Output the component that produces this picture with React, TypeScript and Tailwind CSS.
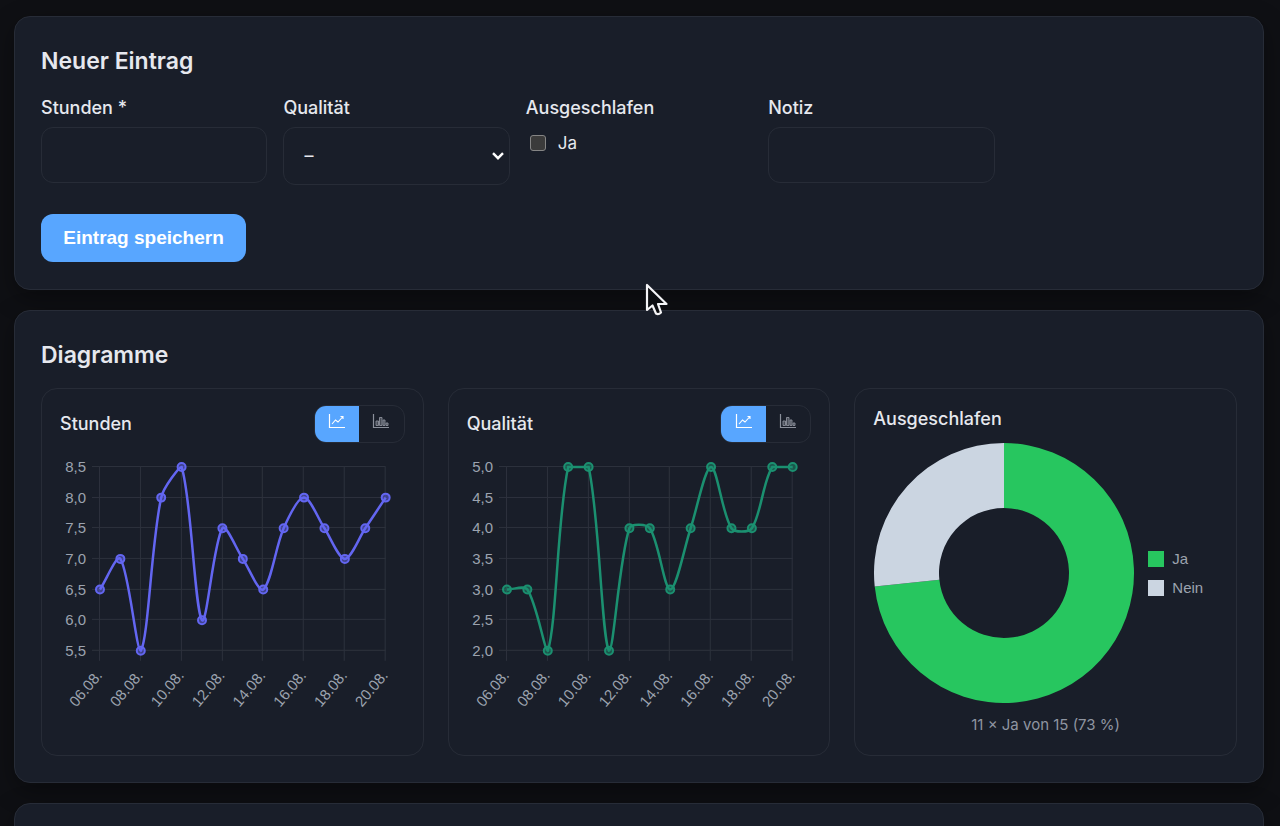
import React from "react";

const DATES = ["06.08.", "08.08.", "10.08.", "12.08.", "14.08.", "16.08.", "18.08.", "20.08."];
const AREA = { left: 40, right: 326, top: 12, bottom: 196 };
const TENSION = 0.3;

type Point = { x: number; y: number };

function clampY(y: number) {
  return Math.max(AREA.top, Math.min(AREA.bottom, y));
}

function smoothPath(points: Point[]) {
  const controls = points.map((cur, i) => {
    const prev = points[Math.max(0, i - 1)];
    const next = points[Math.min(points.length - 1, i + 1)];
    const d01 = Math.hypot(cur.x - prev.x, cur.y - prev.y);
    const d12 = Math.hypot(next.x - cur.x, next.y - cur.y);
    const fa = (TENSION * d01) / (d01 + d12);
    const fb = (TENSION * d12) / (d01 + d12);
    return {
      before: { x: cur.x - fa * (next.x - prev.x), y: clampY(cur.y - fa * (next.y - prev.y)) },
      after: { x: cur.x + fb * (next.x - prev.x), y: clampY(cur.y + fb * (next.y - prev.y)) },
    };
  });
  return points
    .map((p, i) => {
      if (i === 0) return `M${p.x} ${p.y}`;
      const a = controls[i - 1].after;
      const b = controls[i].before;
      return `C${a.x} ${a.y} ${b.x} ${b.y} ${p.x} ${p.y}`;
    })
    .join(" ");
}

function LineChart({ label, values, min, max, color }: { label: string; values: number[]; min: number; max: number; color: string }) {
  const stepX = (AREA.right - AREA.left) / (values.length - 1);
  const toY = (v: number) => AREA.bottom - ((v - min) / (max - min)) * (AREA.bottom - AREA.top);
  const points = values.map((v, i) => ({ x: AREA.left + i * stepX, y: toY(v) }));
  const ticks: number[] = [];
  for (let v = max; v >= min; v -= 0.5) ticks.push(v);

  return (
    <svg viewBox="0 0 345 256" className="block w-full font-['Liberation_Sans',Arial,sans-serif] text-[15px]" role="img" aria-label={label}>
      {ticks.map((v) => (
        <g key={v}>
          <line x1={AREA.left - 8} x2={AREA.right} y1={Math.round(toY(v)) - 0.5} y2={Math.round(toY(v)) - 0.5} stroke="#2d323d" />
          <text x={26} y={toY(v) + 5} textAnchor="end" fill="#9ca3af">
            {v.toFixed(1).replace(".", ",")}
          </text>
        </g>
      ))}
      {DATES.map((d, i) => {
        const x = AREA.left + i * 2 * stepX;
        return (
          <g key={d}>
            <line x1={Math.round(x) - 0.5} x2={Math.round(x) - 0.5} y1={AREA.top} y2={AREA.bottom + 10} stroke="#2d323d" />
            <text transform={`translate(${x + 3} 221) rotate(-50)`} textAnchor="end" fill="#9ca3af">
              {d}
            </text>
          </g>
        );
      })}
      <path d={smoothPath(points)} fill="none" stroke={color} strokeWidth="2.5" />
      {points.map((p) => (
        <circle key={p.x} cx={p.x} cy={p.y} r="4" fill={color} fillOpacity="0.5" stroke={color} strokeWidth="2" />
      ))}
    </svg>
  );
}

function LineIcon() {
  return (
    <svg viewBox="0 0 18 16" className="h-4 w-[18px]" fill="none" stroke="currentColor" aria-hidden="true">
      <path d="M1.500 1v13.500H17" strokeWidth="1.2" />
      <path d="M4 11l3.500-4 2.500 2 5-5.500M12.500 3.500H15V6" strokeWidth="1.1" />
    </svg>
  );
}

function BarIcon() {
  return (
    <svg viewBox="0 0 18 16" className="h-4 w-[18px]" fill="none" stroke="currentColor" aria-hidden="true">
      <path d="M1.500 1v13.500H17" strokeWidth="1.2" />
      <path d="M4 12.500V8h2.500v4.500zM7.500 12.500V4.500H10v8zM11 12.500V7h2v5.500zM14 12.500V10h2v2.500z" fill="currentColor" fillOpacity="0.4" strokeWidth="0.9" />
    </svg>
  );
}

function ChartCard({ title, children }: { title: string; children: React.ReactNode }) {
  return (
    <article className="rounded-2xl border border-[#272c37] px-[18px] pt-4 pb-4">
      <div className="mb-3 flex items-center justify-between">
        <h3 className="text-lg leading-6 font-medium">{title}</h3>
        <div className="flex h-[38px] w-[91px] overflow-hidden rounded-xl border border-[#272c37]" role="group" aria-label={`Diagrammtyp ${title}`}>
          <button type="button" aria-label="Linie" className="flex flex-1 justify-center bg-[#58a6ff] pt-[7px] text-white">
            <LineIcon />
          </button>
          <button type="button" aria-label="Balken" className="flex flex-1 justify-center pt-[7px] text-[#8b909b]">
            <BarIcon />
          </button>
        </div>
      </div>
      {children}
    </article>
  );
}

const CARD = "rounded-2xl border border-[#272c37] bg-[#191e29] px-[26px] shadow-[0_8px_24px_rgba(0,0,0,0.35)]";
const FIELD = "w-full rounded-xl border border-[#272c37] bg-transparent px-5 text-lg text-[#e6e8ee] outline-none";
const LABEL = "mb-2 block text-lg leading-[22px] font-medium";

export default function App() {
  const share = 11 / 15;
  const angle = share * 2 * Math.PI;
  const at = (r: number) => `${130 + r * Math.sin(angle)} ${130 - r * Math.cos(angle)}`;

  return (
    <main className="relative flex h-screen flex-col gap-5 overflow-hidden bg-[#0f1014] pt-4 pr-4 pl-[14px] font-['Inter',sans-serif] text-[#e6e8ee]">
      <section className={`${CARD} shrink-0 pt-7 pb-[27px]`}>
        <h2 className="text-[23px] leading-8 font-semibold">Neuer Eintrag</h2>
        <form onSubmit={(e) => e.preventDefault()}>
          <div className="mt-5 grid grid-cols-5 items-start gap-4">
            <div>
              <label htmlFor="stunden" className={LABEL}>Stunden *</label>
              <input id="stunden" type="text" className={`${FIELD} h-14`} />
            </div>
            <div>
              <label htmlFor="qualitaet" className={LABEL}>Qualität</label>
              <div className="relative">
                <select id="qualitaet" className={`${FIELD} h-[58px] appearance-none`}>
                  <option>–</option>
                </select>
                <svg viewBox="0 0 12 8" className="pointer-events-none absolute top-[25px] right-1.5 h-2 w-3" fill="none" stroke="#fff" strokeWidth="2.4" aria-hidden="true">
                  <path d="M1 1.200l5 5 5-5" />
                </svg>
              </div>
            </div>
            <fieldset>
              <legend className={LABEL}>Ausgeschlafen</legend>
              <label className="flex items-center gap-3 pl-1 text-[17px] leading-8">
                <input type="checkbox" className="size-4 appearance-none rounded-[3px] border border-[#858585] bg-[#3b3b3b]" />
                Ja
              </label>
            </fieldset>
            <div>
              <label htmlFor="notiz" className={LABEL}>Notiz</label>
              <input id="notiz" type="text" className={`${FIELD} h-14`} />
            </div>
          </div>
          <button type="submit" className="mt-[29px] h-12 min-w-[205px] rounded-xl bg-[#58a6ff] px-5 font-['Liberation_Sans',Arial,sans-serif] text-[19px] font-bold text-white">
            Eintrag speichern
          </button>
        </form>
      </section>

      <section className={`${CARD} shrink-0 pt-7 pb-[26px]`}>
        <h2 className="text-[23px] leading-8 font-semibold">Diagramme</h2>
        <div className="mt-[17px] grid grid-cols-3 gap-6">
          <ChartCard title="Stunden">
            <LineChart label="Stunden" min={5.5} max={8.5} color="#6366f1" values={[6.5, 7, 5.5, 8, 8.5, 6, 7.5, 7, 6.5, 7.5, 8, 7.5, 7, 7.5, 8]} />
          </ChartCard>
          <ChartCard title="Qualität">
            <LineChart label="Qualität" min={2} max={5} color="#1b9070" values={[3, 3, 2, 5, 5, 2, 4, 4, 3, 4, 5, 4, 4, 5, 5]} />
          </ChartCard>
          <article className="rounded-2xl border border-[#272c37] px-[18px] pt-[18px] pb-[18px]">
            <h3 className="text-lg leading-6 font-medium">Ausgeschlafen</h3>
            <div className="mt-3 flex items-center gap-[14px] pl-px">
              <svg viewBox="0 0 260 260" className="size-[260px]" role="img" aria-label="Ausgeschlafen">
                <path d={`M130 0A130 130 0 1 1 ${at(130)}L${at(65)}A65 65 0 1 0 130 65Z`} fill="#27c65f" />
                <path d={`M${at(130)}A130 130 0 0 1 130 0V65A65 65 0 0 0 ${at(65)}Z`} fill="#cbd5e1" />
              </svg>
              <ul className="flex flex-col gap-[13px] font-['Liberation_Sans',Arial,sans-serif] text-[15px] leading-4 text-[#9ca3af]">
                <li className="flex items-center gap-2"><span className="size-4 bg-[#27c65f]" />Ja</li>
                <li className="flex items-center gap-2"><span className="size-4 bg-[#cbd5e1]" />Nein</li>
              </ul>
            </div>
            <p className="mt-2.5 text-center text-[15px] leading-6 text-[#8f95a1]">11 × Ja von 15 (73 %)</p>
          </article>
        </div>
      </section>

      <section className={`${CARD} h-24 shrink-0`} />

      <svg viewBox="0 0 24 34" className="pointer-events-none absolute top-[283px] left-[645px] h-[34px] w-6" aria-hidden="true">
        <path d="M2 2v25l5.500-4.500 3.500 8q2.500 1.500 5-1L13 21h8.500z" fill="#0c0d10" stroke="#f4f4f6" strokeWidth="2.2" strokeLinejoin="round" />
      </svg>
    </main>
  );
}
